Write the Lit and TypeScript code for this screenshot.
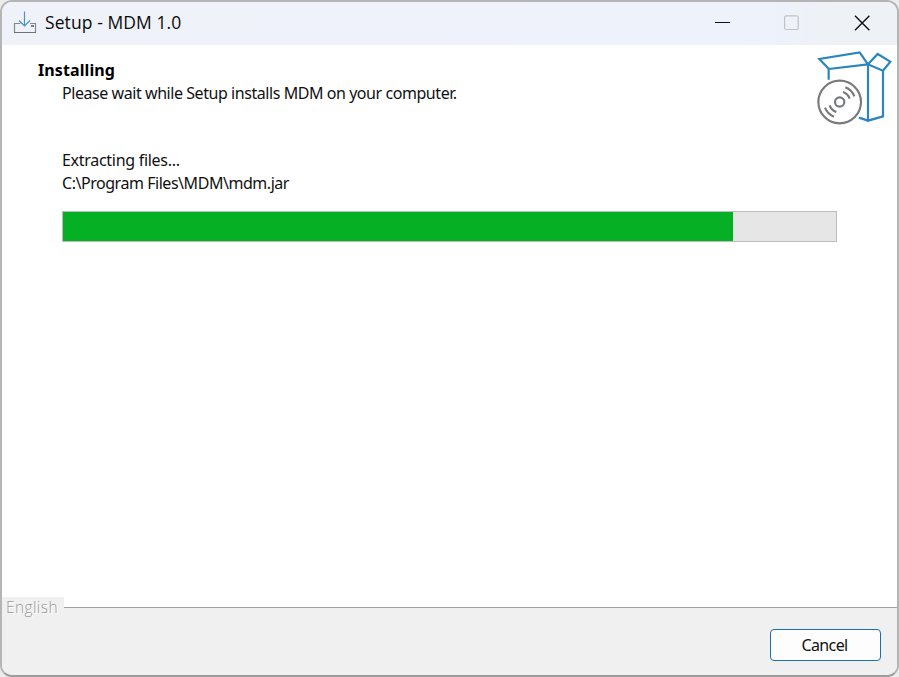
import { LitElement, html, css } from "lit";
import { customElement, property, state } from "lit/decorators.js";
import { styleMap } from "lit/directives/style-map.js";

@customElement("setup-progress")
class SetupProgress extends LitElement {
  @property({ type: Number }) value = 0;

  static styles = css`
    :host { display: block; }
    .track {
      box-sizing: border-box;
      height: 31px;
      border: 1px solid #bcbcbc;
      background: #e6e6e6;
    }
    .fill { height: 100%; background: #06b025; }
  `;

  render() {
    return html`<div class="track">
      <div class="fill" style=${styleMap({ width: `${this.value}%` })}></div>
    </div>`;
  }
}

@customElement("title-bar")
class TitleBar extends LitElement {
  @property() heading = "";

  static styles = css`
    :host {
      display: flex;
      align-items: center;
      box-sizing: border-box;
      height: 43px;
      padding-bottom: 2px;
      background: linear-gradient(90deg, #eff2f9 0%, #eff2fa 50%, #edf2fb 86%, #eef1f5 93%, #eef1f5 100%);
      font: 17.5px/24px "Open Sans", "Noto Sans", sans-serif;
      color: #0b0b0b;
    }
    svg { display: block; flex: none; }
    .icon { margin-left: 11px; }
    .text { margin-left: 8px; margin-top: -1px; flex: 1; white-space: pre; letter-spacing: 0.08px; }
    .controls { display: flex; }
    .control { display: grid; place-items: center; width: 70px; height: 41px; }
  `;

  render() {
    return html`
      <svg class="icon" width="24" height="24" viewBox="0 0 24 24" fill="none">
        <path d="M7.5 12.5H1.5v9h21v-9H17" stroke="#85888c" stroke-width="1.2" />
        <path d="M1 21.5h22" stroke="#6f7276" stroke-width="1" />
        <path d="M18 15h3" stroke="#555" stroke-width="1.3" />
        <path d="M11.5 0.5v14.5M6 9.5l5.5 5.5L17 9.5" stroke="#4a93bb" stroke-width="1.2" />
      </svg>
      <span class="text">${this.heading}</span>
      <div class="controls">
        <div class="control">
          <svg width="16" height="16" viewBox="0 0 16 16"><path d="M1 7.5h15" stroke="#111" stroke-width="1.1" /></svg>
        </div>
        <div class="control">
          <svg width="16" height="16" viewBox="0 0 16 16"><rect x="0.6" y="0.9" width="13.6" height="13.6" rx="1.5" fill="none" stroke="#bfc1c6" stroke-width="1.2" /></svg>
        </div>
        <div class="control">
          <svg width="16" height="16" viewBox="0 0 16 16"><path d="M1 0.8l14.4 14.4M15.4 0.8L1 15.2" stroke="#111" stroke-width="1.4" /></svg>
        </div>
      </div>
    `;
  }
}

@customElement("app-root")
class AppRoot extends LitElement {
  @state() private progress = 86.7;

  static styles = css`
    :host {
      display: block;
      width: 899px;
      height: 677px;
      background: #ececec;
      overflow: hidden;
      font: 16px/23px "Noto Sans", sans-serif;
      color: #111;
    }
    .window {
      box-sizing: border-box;
      width: 899px;
      height: 677px;
      border: 2px solid #b5b5b5;
      border-bottom-color: #9c9c9c;
      border-radius: 12px;
      overflow: hidden;
      display: flex;
      flex-direction: column;
      background: #fff;
    }
    .header { display: flex; justify-content: space-between; padding: 5px 4px 0 36px; height: 85px; }
    .header h1 { margin: 9px 0 0; font-size: 16px; line-height: 23px; font-weight: 700; color: #000; letter-spacing: 0.1px; }
    .header p { margin: 0 0 0 24px; letter-spacing: -0.44px; white-space: nowrap; }
    .package { display: block; flex: none; }
    .body { flex: 1; padding: 14px 60px 0; }
    .body p { margin: 0; white-space: nowrap; }
    .status { letter-spacing: -0.29px; }
    .file { letter-spacing: -0.46px; }
    .bar { margin-top: 16px; }
    .divider { display: flex; height: 20px; align-items: stretch; background: linear-gradient(#fff 0 10px, #f0f0f0 10px); }
    .lang {
      width: 62px;
      box-sizing: border-box;
      padding-left: 4px;
      background: #f0f0f0;
      color: #989898;
      text-shadow: 1px 1px 0 #fff;
      font: 300 15.5px/20px "Open Sans", "Noto Sans", sans-serif;
      letter-spacing: 0.4px;
    }
    .rule { flex: 1; height: 1px; margin-top: 10px; background: #a0a0a0; }
    .footer { background: #f0f0f0; height: 58px; display: flex; justify-content: flex-end; align-items: flex-start; padding: 12px 16px 0 0; box-sizing: border-box; }
    .cancel {
      box-sizing: border-box;
      width: 111px;
      height: 32px;
      border: 1px solid #1a6fb0;
      border-radius: 4px;
      background: #fdfdfd;
      color: #111;
      padding: 0 2px 1px 0;
      font: 16px/28px "Noto Sans", sans-serif;
      letter-spacing: -0.6px;
    }
  `;

  render() {
    return html`
      <div class="window">
        <title-bar heading="Setup - MDM 1.0"></title-bar>
        <div class="header">
          <div>
            <h1>Installing</h1>
            <p>Please wait while Setup installs MDM on your computer.</p>
          </div>
          <svg class="package" width="77" height="75" viewBox="33 24 231 225" fill="none">
            <g stroke="#2b85bf" stroke-width="6.6">
              <path d="M71 113V80L43 51L164 31L189 67L71 81" />
              <path d="M189 67L218 36L256 59L234 86L189 67V236L234 223V86" />
              <path d="M189 236L162 227" />
            </g>
            <g stroke="#77797b" stroke-width="6.4">
              <circle cx="104" cy="180" r="64" />
              <circle cx="104" cy="180" r="14" />
              <path d="M114 150A32 32 0 0 1 134 170" />
              <path d="M121 136A47 47 0 0 1 148 163" />
              <path d="M94 210A32 32 0 0 1 74 190" />
              <path d="M87 224A47 47 0 0 1 60 197" />
            </g>
          </svg>
        </div>
        <div class="body">
          <p class="status">Extracting files...</p>
          <p class="file">C:\\Program Files\\MDM\\mdm.jar</p>
          <setup-progress class="bar" .value=${this.progress}></setup-progress>
        </div>
        <div class="divider"><span class="lang">English</span><span class="rule"></span></div>
        <div class="footer"><button class="cancel">Cancel</button></div>
      </div>
    `;
  }
}
